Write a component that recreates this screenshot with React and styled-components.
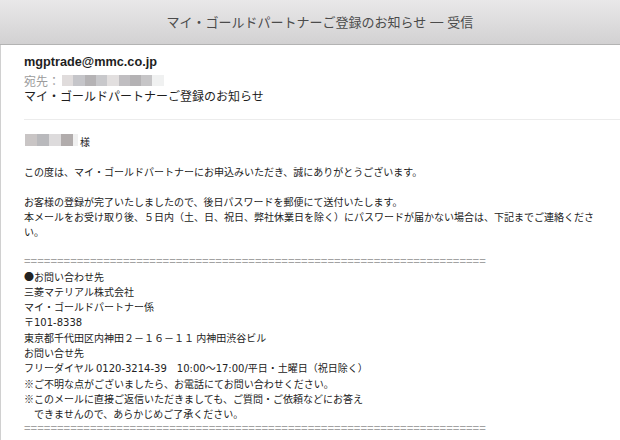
import React from 'react';
import styled, { createGlobalStyle } from 'styled-components';

const GlobalStyle = createGlobalStyle`
  html, body {
    margin: 0;
    padding: 0;
    height: 100%;
    overflow: hidden;
    background: #fff;
  }
  body {
    font-family: "Liberation Sans", "Noto Sans CJK JP", sans-serif;
  }
`;

const Window = styled.div`
  display: flex;
  flex-direction: column;
  width: 620px;
  height: 440px;
`;

const TitleBar = styled.div`
  box-sizing: border-box;
  height: 45px;
  flex-shrink: 0;
  display: flex;
  align-items: center;
  justify-content: center;
  padding-left: 20px;
  padding-bottom: 1px;
  background: linear-gradient(#e9e8e9, #d2d1d2);
  border-bottom: 1px solid #b3b3b3;
  color: #4b4b4b;
  font-family: "Noto Sans CJK JP", sans-serif;
  font-size: 13px;
`;

const Dash = styled.span`
  font-family: "Liberation Sans", sans-serif;
  margin: 0 4px;
`;

const Content = styled.div`
  flex: 1;
  border-left: 1px solid #d0d0d0;
`;

const Header = styled.div`
  margin-left: 23px;
  padding: 8px 0 15px;
  border-bottom: 1px solid #ececec;
`;

const Sender = styled.div`
  font-weight: bold;
  font-size: 12.7px;
  line-height: 18px;
  color: #1e1e1e;
`;

const Recipient = styled.div`
  display: flex;
  margin-top: 3px;
  font-size: 12px;
  line-height: 16px;
  color: #9c9c9c;
`;

const Subject = styled.div`
  font-size: 12px;
  line-height: 14px;
  color: #1e1e1e;
`;

const Mosaic = styled.span`
  display: flex;
  margin: ${p => p.$m};
`;

const Pixel = styled.span`
  width: ${p => p.$w}px;
  height: ${p => p.$h}px;
  background: ${p => p.$c};
`;

const Body = styled.div`
  padding: 14px 20px 0 23px;
  font-family: "Noto Sans CJK JP", sans-serif;
  font-size: 10px;
  line-height: 15px;
  color: #222;
`;

const Greeting = styled.div`
  display: flex;
  align-items: flex-start;
  margin-bottom: 15px;
`;

const Para = styled.p`
  margin: 0 0 15px;
`;

const Line = styled.div`
  white-space: pre;
`;

const Latin = styled.span`
  font-family: "DejaVu Sans", sans-serif;
`;

const Rule = styled.div`
  font-family: "Liberation Sans", sans-serif;
  font-size: 11.3px;
  line-height: 15px;
  color: #a2a2a2;
  white-space: pre;
`;

const toBlocks = ['#e0dcdc', '#c5c5c9', '#b5b3b5', '#c8c8cb', '#e2dfdf', '#c0bec1', '#b4b2b4', '#c6c5c7', '#f0f1f1'];
const nameBlocks = [
  ['#c9c5c5', 12],
  ['#b9b9bc', 12],
  ['#dddbdc', 12],
  ['#b1acac', 12],
  ['#f0f0f0', 5],
];

const rule = '='.repeat(70);

export default function App() {
  return (
    <>
      <GlobalStyle />
      <Window>
        <TitleBar>
          マイ・ゴールドパートナーご登録のお知らせ<Dash>—</Dash>受信
        </TitleBar>
        <Content>
          <Header>
            <Sender>mgptrade@mmc.co.jp</Sender>
            <Recipient>
              宛先：
              <Mosaic $m="1px 0 0 2px">
                {toBlocks.map((c, i) => (
                  <Pixel key={i} $c={c} $w={11.3} $h={11} />
                ))}
              </Mosaic>
            </Recipient>
            <Subject>マイ・ゴールドパートナーご登録のお知らせ</Subject>
          </Header>
          <Body>
            <Greeting>
              <Mosaic $m="0 2px 0 1px">
                {nameBlocks.map(([c, w], i) => (
                  <Pixel key={i} $c={c} $w={w} $h={12} />
                ))}
              </Mosaic>
              様
            </Greeting>
            <Para>この度は、マイ・ゴールドパートナーにお申込みいただき、誠にありがとうございます。</Para>
            <Para>
              お客様の登録が完了いたしましたので、後日パスワードを郵便にて送付いたします。
              <br />
              本メールをお受け取り後、５日内（土、日、祝日、弊社休業日を除く）にパスワードが届かない場合は、下記までご連絡ください。
            </Para>
            <Rule>{rule}</Rule>
            <Line>●お問い合わせ先</Line>
            <Line>三菱マテリアル株式会社</Line>
            <Line>マイ・ゴールドパートナー係</Line>
            <Line>
              〒<Latin>101-8338</Latin>
            </Line>
            <Line>東京都千代田区内神田２－１６－１１ 内神田渋谷ビル</Line>
            <Line>お問い合せ先</Line>
            <Line>
              フリーダイヤル <Latin>0120-3214-39</Latin>　<Latin>10:00</Latin>～<Latin>17:00/</Latin>平日・土曜日（祝日除く）
            </Line>
            <Line>※ご不明な点がございましたら、お電話にてお問い合わせください。</Line>
            <Line>※このメールに直接ご返信いただきましても、ご質問・ご依頼などにお答え</Line>
            <Line>　できませんので、あらかじめご了承ください。</Line>
            <Rule>{rule}</Rule>
          </Body>
        </Content>
      </Window>
    </>
  );
}
